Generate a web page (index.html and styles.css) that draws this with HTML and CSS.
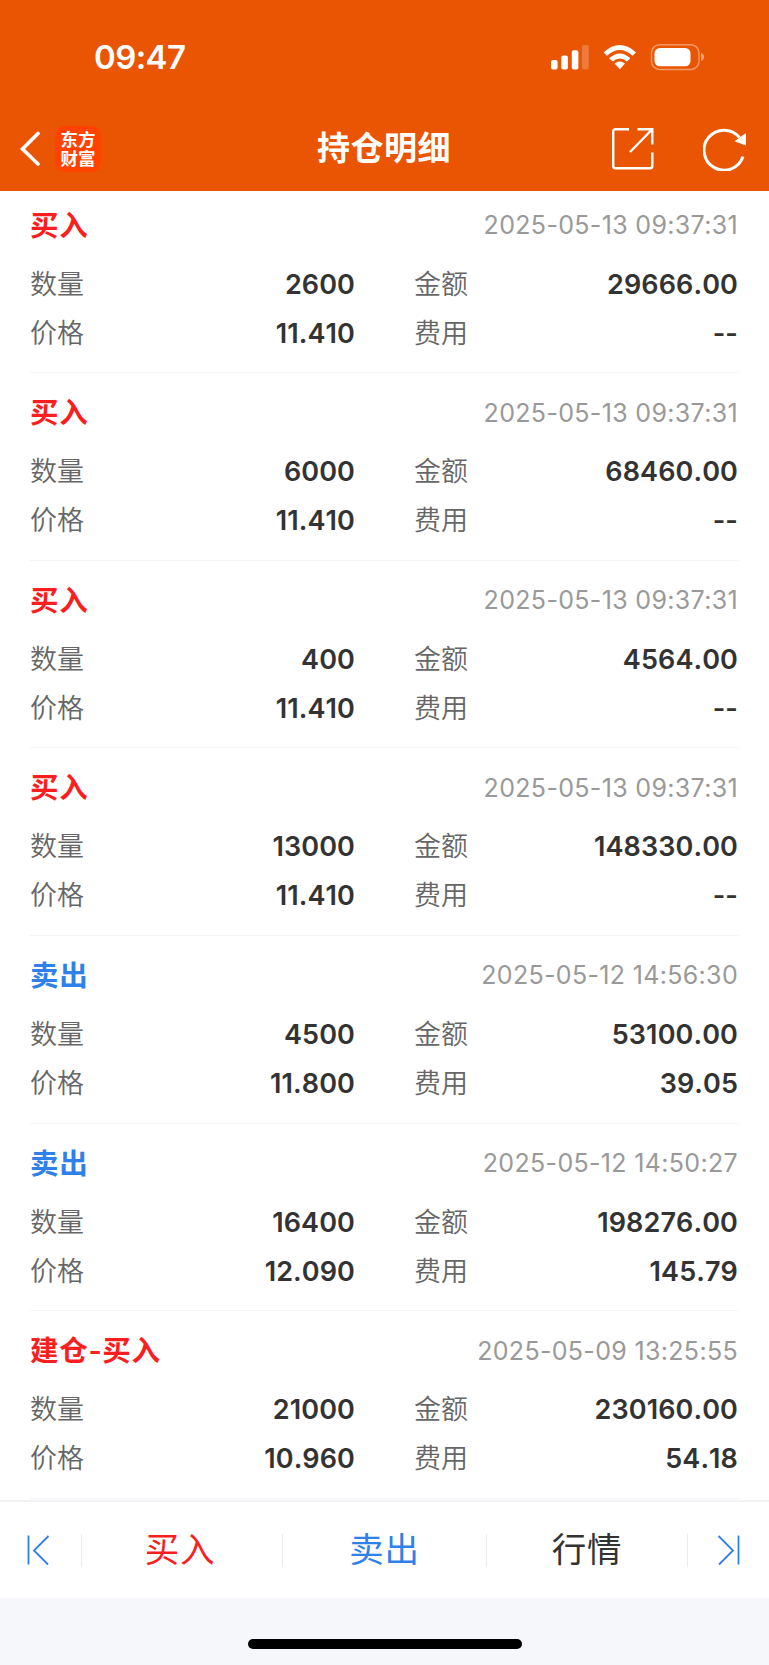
FILE: index.html
```
<!DOCTYPE html>
<html lang="zh-CN">
<head>
  <meta charset="utf-8">
  <meta name="viewport" content="width=device-width">
  <title>持仓明细</title>
  <link rel="stylesheet" href="styles.css">
</head>
<body>
  <div class="header">
    <div class="status-bar">
      <div class="time">09:47</div>
      <svg class="status-icons" width="156" height="28" viewBox="0 0 156 28" fill="#fff">
        <rect x="1" y="17" width="6.6" height="9.5" rx="2"/>
        <rect x="11.3" y="12.5" width="6.6" height="14" rx="2"/>
        <rect x="21.8" y="7.2" width="6.6" height="19.3" rx="2"/>
        <rect x="32" y="2" width="6.8" height="24.5" rx="2" opacity="0.22"/>
        <path d="M53.6 9.4 Q69.8 -5.2 86 9.4 L82.6 12.8 Q69.8 1.4 57 12.8 Z"/>
        <path d="M59.2 15.2 Q69.8 5.6 80.4 15.2 L76.8 18.6 Q69.8 12.4 62.8 18.6 Z"/>
        <path d="M64.6 20.6 Q69.8 16.6 75 20.6 L69.8 26.3 Z"/>
        <rect x="101.5" y="1.8" width="47.5" height="24.6" rx="8" fill="none" stroke="#fff" stroke-width="1.5" opacity="0.4"/>
        <rect x="104.5" y="5" width="36" height="18.2" rx="5.2"/>
        <path d="M151 10 Q154 10.8 154 14 Q154 17.2 151 18 Z" opacity="0.45"/>
      </svg>
    </div>
    <div class="nav-bar">
      <div class="nav-left">
        <svg width="22" height="36" viewBox="0 0 22 36" fill="none" stroke="#fff" stroke-width="3.6" stroke-linecap="round">
          <path d="M19 2.5 L3.5 18 L19 33"/>
        </svg>
        <div class="logo">东方财富</div>
      </div>
      <h1>持仓明细</h1>
      <div class="nav-right">
        <svg width="44" height="44" viewBox="0 0 44 44" fill="none" stroke="#fff" stroke-width="2.4">
          <path d="M18 2.2 H4.5 Q2.2 2.2 2.2 4.5 V39 Q2.2 41.3 4.5 41.3 H39 Q41.3 41.3 41.3 39 V25.5"/>
          <path d="M26.5 2.2 H41.3 V17.5 M41 2.5 L19 25"/>
        </svg>
        <svg width="44" height="44" viewBox="0 0 44 44" fill="none">
          <path d="M40 29.5 A20 20 0 1 1 36.5 10.5" stroke="#fff" stroke-width="3"/>
          <path d="M31.5 14.2 L43 6 V18.6 Z" fill="#fff"/>
        </svg>
      </div>
    </div>
  </div>

  <div class="list">
    <div class="record">
      <div class="record-head"><b class="buy">买入</b><span class="date">2025-05-13 09:37:31</span></div>
      <div class="record-row"><span>数量</span><b>2600</b><span>金额</span><b>29666.00</b></div>
      <div class="record-row"><span>价格</span><b>11.410</b><span>费用</span><b>--</b></div>
    </div>
    <div class="record">
      <div class="record-head"><b class="buy">买入</b><span class="date">2025-05-13 09:37:31</span></div>
      <div class="record-row"><span>数量</span><b>6000</b><span>金额</span><b>68460.00</b></div>
      <div class="record-row"><span>价格</span><b>11.410</b><span>费用</span><b>--</b></div>
    </div>
    <div class="record">
      <div class="record-head"><b class="buy">买入</b><span class="date">2025-05-13 09:37:31</span></div>
      <div class="record-row"><span>数量</span><b>400</b><span>金额</span><b>4564.00</b></div>
      <div class="record-row"><span>价格</span><b>11.410</b><span>费用</span><b>--</b></div>
    </div>
    <div class="record">
      <div class="record-head"><b class="buy">买入</b><span class="date">2025-05-13 09:37:31</span></div>
      <div class="record-row"><span>数量</span><b>13000</b><span>金额</span><b>148330.00</b></div>
      <div class="record-row"><span>价格</span><b>11.410</b><span>费用</span><b>--</b></div>
    </div>
    <div class="record">
      <div class="record-head"><b class="sell">卖出</b><span class="date">2025-05-12 14:56:30</span></div>
      <div class="record-row"><span>数量</span><b>4500</b><span>金额</span><b>53100.00</b></div>
      <div class="record-row"><span>价格</span><b>11.800</b><span>费用</span><b>39.05</b></div>
    </div>
    <div class="record">
      <div class="record-head"><b class="sell">卖出</b><span class="date">2025-05-12 14:50:27</span></div>
      <div class="record-row"><span>数量</span><b>16400</b><span>金额</span><b>198276.00</b></div>
      <div class="record-row"><span>价格</span><b>12.090</b><span>费用</span><b>145.79</b></div>
    </div>
    <div class="record">
      <div class="record-head"><b class="buy">建仓-买入</b><span class="date">2025-05-09 13:25:55</span></div>
      <div class="record-row"><span>数量</span><b>21000</b><span>金额</span><b>230160.00</b></div>
      <div class="record-row"><span>价格</span><b>10.960</b><span>费用</span><b>54.18</b></div>
    </div>
  </div>

  <div class="toolbar">
    <div class="tool prev">
      <svg width="24" height="32" viewBox="0 0 24 32" fill="none" stroke="#2f80e8" stroke-width="1.8">
        <path d="M2.5 1.5 V30.5 M22.5 2 L8 16.5 L22 30.5"/>
      </svg>
    </div>
    <div class="tool buy"><span>买入</span></div>
    <div class="tool sell"><span>卖出</span></div>
    <div class="tool"><span>行情</span></div>
    <div class="tool next">
      <svg width="24" height="32" viewBox="0 0 24 32" fill="none" stroke="#2f80e8" stroke-width="1.8">
        <path d="M21.5 1.5 V30.5 M1.5 2 L16 16.5 L2 30.5"/>
      </svg>
    </div>
  </div>
  <div class="home-area">
    <div class="home-indicator"></div>
  </div>
</body>
</html>
```
FILE: styles.css
```
* {
  box-sizing: border-box;
}

body {
  margin: 0;
  width: 769px;
  height: 1665px;
  overflow: hidden;
  display: flex;
  flex-direction: column;
  background-color: #fff;
  color: #333;
  font-family: Inter, "Noto Sans CJK SC", sans-serif;
}

svg {
  display: block;
}

.header {
  height: 191px;
  flex: none;
  background-color: #ea5504;
  color: #fff;
}

.status-bar {
  height: 106px;
  padding: 9px 63px 0 94px;
  display: flex;
  justify-content: space-between;
  align-items: center;
}

.status-icons {
  margin-top: -2px;
}

.time {
  font-size: 33px;
  font-weight: 600;
  line-height: 38px;
  padding-bottom: 2px;
  letter-spacing: -0.6px;
}

.nav-bar {
  height: 85px;
  padding: 0 22px 0 19px;
  display: grid;
  grid-template-columns: 1fr auto 1fr;
  align-items: center;
}

.nav-left {
  display: flex;
  align-items: center;
  gap: 14px;
}

.logo {
  width: 46px;
  height: 46px;
  border-radius: 10px;
  background-color: #ff4200;
  padding: 3px 5px 0 5.5px;
  font-family: "Noto Sans CJK SC", sans-serif;
  font-size: 17.5px;
  font-weight: 700;
  line-height: 19px;
}

.nav-bar h1 {
  margin: 0;
  padding: 0 0 1px 2px;
  font-size: 33px;
  font-weight: 600;
  line-height: 40px;
  letter-spacing: 0.5px;
}

.nav-right {
  display: flex;
  justify-content: flex-end;
  gap: 48px;
}

.list {
  height: 1309px;
  flex: none;
  padding: 0 30px;
  overflow: hidden;
}

.record {
  height: 187.67px;
  padding-top: 18.5px;
  border-bottom: 1.5px solid #f5f5f7;
}

/* the list is scrolled a little under the header */
.record:first-child {
  height: 182px;
  padding-top: 13px;
}

.record-head {
  height: 42px;
  margin-bottom: 13.5px;
  display: flex;
  justify-content: space-between;
  align-items: center;
}

.record-head b {
  padding-bottom: 4px;
  font-size: 28.5px;
  font-weight: 600;
  letter-spacing: 0.7px;
}

.date {
  padding-right: 1px;
  font-size: 25px;
  letter-spacing: 0.33px;
  color: #999;
}

.record-row {
  height: 49px;
  display: grid;
  grid-template-columns: 100px 225px 99px 1fr;
  align-items: center;
  line-height: 49px;
}

.record-row span {
  font-size: 27px;
  font-weight: 350;
  color: #666;
}

.record-row b {
  font-size: 27px;
  font-weight: 600;
  font-kerning: none;
  letter-spacing: 0.1px;
  text-align: right;
}

.record-row b:last-child {
  padding-right: 1px;
}

.record-row span:nth-child(3) {
  padding-left: 59px;
  width: 159px;
}

.buy {
  color: #fa1e1e;
}

.sell {
  color: #2f80e8;
}

.toolbar {
  height: 98px;
  flex: none;
  border-top: 2px solid #f2f3f6;
  display: grid;
  grid-template-columns: 82px 201px 204px 201px 81px;
  align-items: center;
}

.tool {
  height: 33px;
  display: flex;
  align-items: center;
  justify-content: center;
  border-right: 1px solid #ececee;
  font-size: 34.5px;
  letter-spacing: 0.7px;
}

.tool span {
  padding: 0 0 6px;
}

.tool.buy span {
  padding-right: 4px;
}

.tool.prev {
  justify-content: flex-start;
  padding-left: 26px;
}

.tool.next {
  border-right: none;
  justify-content: flex-end;
  padding-right: 28px;
}

.home-area {
  flex: 1;
  display: flex;
  justify-content: center;
  align-items: flex-start;
  padding-top: 41px;
  background-color: #f6f7fa;
}

.home-indicator {
  width: 274px;
  height: 10px;
  border-radius: 5px;
  background-color: #000;
}
```
